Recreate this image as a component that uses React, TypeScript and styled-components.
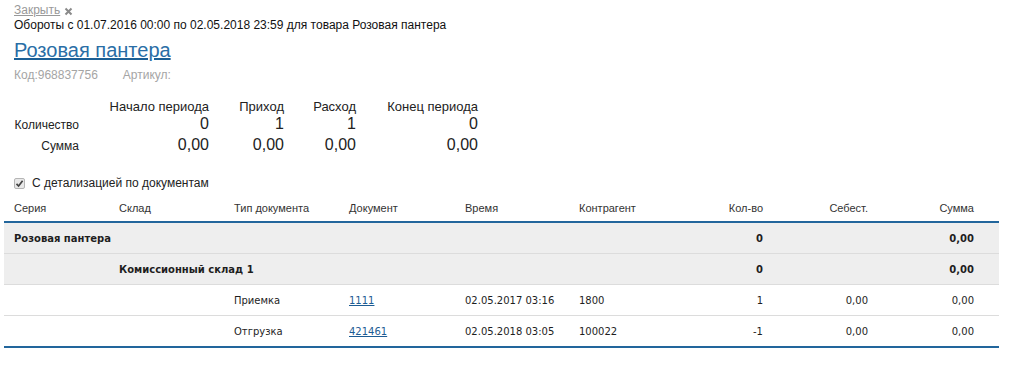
import styled, { createGlobalStyle } from 'styled-components'

const GlobalStyle = createGlobalStyle`
  body {
    margin: 0;
    background: #fff;
    color: #222;
    font-family: "Liberation Sans", Arial, sans-serif;
  }
`

const Page = styled.div`
  padding: 3px 18px 0 4px;
`

const Head = styled.div`
  padding-left: 10px;
`

const CloseRow = styled.div`
  align-items: center;
  display: flex;
  font-size: 12px;
  gap: 4px;
  height: 14px;
  line-height: 14px;
`

const CloseLink = styled.a`
  color: #999;
  text-decoration: underline;
`

const Subtitle = styled.div`
  color: #111;
  font-size: 12px;
  line-height: 14px;
  margin-top: 1px;
`

const Title = styled.a`
  color: #2a6ea6;
  display: inline-block;
  font-size: 20px;
  line-height: 24px;
  margin-top: 6px;
  text-decoration: underline;
  text-decoration-color: #1c5f95;
`

const Meta = styled.div`
  color: #a5a5a5;
  display: flex;
  font-size: 12px;
  gap: 25px;
  line-height: 14px;
  margin-top: 6px;
`

const Stats = styled.div`
  align-items: baseline;
  color: #222;
  display: grid;
  grid-template-columns: 65px 130px 75px 72px 122px;
  margin-top: 18px;
  text-align: right;
`

const StatHead = styled.div`
  font-size: 13px;
  line-height: 14px;
`

const StatLabel = styled.div`
  font-size: 12px;
  line-height: 20px;
`

const StatValue = styled.div`
  font-size: 16px;
  line-height: 20px;
`

const CheckRow = styled.label`
  align-items: center;
  display: flex;
  font-size: 12px;
  gap: 7px;
  line-height: 14px;
  margin-top: 20px;
`

const CheckBox = styled.span`
  align-items: center;
  background: #e9e9e9;
  border: 1px solid #b5b5b5;
  border-radius: 2px;
  box-sizing: border-box;
  display: inline-flex;
  height: 11px;
  justify-content: center;
  width: 11px;
`

const Table = styled.table`
  border-collapse: collapse;
  font-family: "DejaVu Sans", Tahoma, sans-serif;
  font-size: 10px;
  margin-top: 6px;
  table-layout: fixed;
  width: 100%;
`

const Th = styled.th<{ $right?: boolean; $pad?: number }>`
  border-bottom: 2px solid #22669c;
  color: #333;
  font-family: "Liberation Sans", Arial, sans-serif;
  font-size: 11px;
  font-weight: normal;
  line-height: 13px;
  padding: 6px ${({ $pad }) => $pad ?? 10}px 6px 10px;
  text-align: ${({ $right }) => ($right ? 'right' : 'left')};
`

const Row = styled.tr<{ $group?: boolean }>`
  background: ${({ $group }) => ($group ? '#eeeeee' : '#fff')};
  border-bottom: 1px solid #dcdcdc;

  &:last-child {
    border-bottom: 2px solid #22669c;
  }
`

const Td = styled.td<{ $right?: boolean; $bold?: boolean; $pad?: number }>`
  color: #1e1e1e;
  font-weight: ${({ $bold }) => ($bold ? 'bold' : 'normal')};
  height: 30px;
  line-height: 13px;
  padding: 0 ${({ $pad }) => $pad ?? 10}px 0 10px;
  text-align: ${({ $right }) => ($right ? 'right' : 'left')};
  white-space: nowrap;
`

const DocLink = styled.a`
  color: #1d5c93;
  text-decoration: underline;
`

const CloseIcon = () => (
  <svg width="9" height="9" viewBox="0 0 9 9" style={{ marginTop: 3 }}>
    <path d="M1.5 1.5 L7.5 7.5 M7.5 1.5 L1.5 7.5" stroke="#8a8a8a" strokeWidth="2" />
  </svg>
)

const CheckIcon = () => (
  <svg width="9" height="9" viewBox="0 0 9 9">
    <path d="M1.5 4.8 L3.6 7 L7.6 1.8" stroke="#444" strokeWidth="1.7" fill="none" />
  </svg>
)

const columns = [
  { title: 'Серия', width: 105 },
  { title: 'Склад', width: 115 },
  { title: 'Тип документа', width: 115 },
  { title: 'Документ', width: 116 },
  { title: 'Время', width: 114 },
  { title: 'Контрагент', width: 99 },
  { title: 'Кол-во', width: 105, right: true },
  { title: 'Себест.', width: 105, right: true },
  { title: 'Сумма', width: 121, right: true, pad: 25 },
]

const docs = [
  { type: 'Приемка', doc: '1111', time: '02.05.2017 03:16', agent: '1800', qty: '1', cost: '0,00', sum: '0,00' },
  { type: 'Отгрузка', doc: '421461', time: '02.05.2018 03:05', agent: '100022', qty: '-1', cost: '0,00', sum: '0,00' },
]

export default function App() {
  return (
    <Page>
      <GlobalStyle />
      <Head>
        <CloseRow>
          <CloseLink href="#">Закрыть</CloseLink>
          <CloseIcon />
        </CloseRow>
        <Subtitle>Обороты с 01.07.2016 00:00 по 02.05.2018 23:59 для товара Розовая пантера</Subtitle>
        <Title href="#">Розовая пантера</Title>
        <Meta>
          <span>Код:968837756</span>
          <span>Артикул:</span>
        </Meta>
        <Stats>
          <StatHead />
          <StatHead>Начало периода</StatHead>
          <StatHead>Приход</StatHead>
          <StatHead>Расход</StatHead>
          <StatHead>Конец периода</StatHead>
          <StatLabel>Количество</StatLabel>
          <StatValue>0</StatValue>
          <StatValue>1</StatValue>
          <StatValue>1</StatValue>
          <StatValue>0</StatValue>
          <StatLabel>Сумма</StatLabel>
          <StatValue>0,00</StatValue>
          <StatValue>0,00</StatValue>
          <StatValue>0,00</StatValue>
          <StatValue>0,00</StatValue>
        </Stats>
        <CheckRow>
          <CheckBox>
            <CheckIcon />
          </CheckBox>
          С детализацией по документам
        </CheckRow>
      </Head>
      <Table>
        <colgroup>
          {columns.map((c) => (
            <col key={c.title} style={{ width: c.width }} />
          ))}
        </colgroup>
        <thead>
          <tr>
            {columns.map((c) => (
              <Th key={c.title} $right={c.right} $pad={c.pad}>
                {c.title}
              </Th>
            ))}
          </tr>
        </thead>
        <tbody>
          <Row $group>
            <Td colSpan={6} $bold>
              Розовая пантера
            </Td>
            <Td $right $bold>0</Td>
            <Td />
            <Td $right $bold $pad={25}>0,00</Td>
          </Row>
          <Row $group>
            <Td />
            <Td colSpan={5} $bold>
              Комиссионный склад 1
            </Td>
            <Td $right $bold>0</Td>
            <Td />
            <Td $right $bold $pad={25}>0,00</Td>
          </Row>
          {docs.map((d) => (
            <Row key={d.doc}>
              <Td />
              <Td />
              <Td>{d.type}</Td>
              <Td>
                <DocLink href="#">{d.doc}</DocLink>
              </Td>
              <Td>{d.time}</Td>
              <Td>{d.agent}</Td>
              <Td $right>{d.qty}</Td>
              <Td $right>{d.cost}</Td>
              <Td $right $pad={25}>{d.sum}</Td>
            </Row>
          ))}
        </tbody>
      </Table>
    </Page>
  )
}
